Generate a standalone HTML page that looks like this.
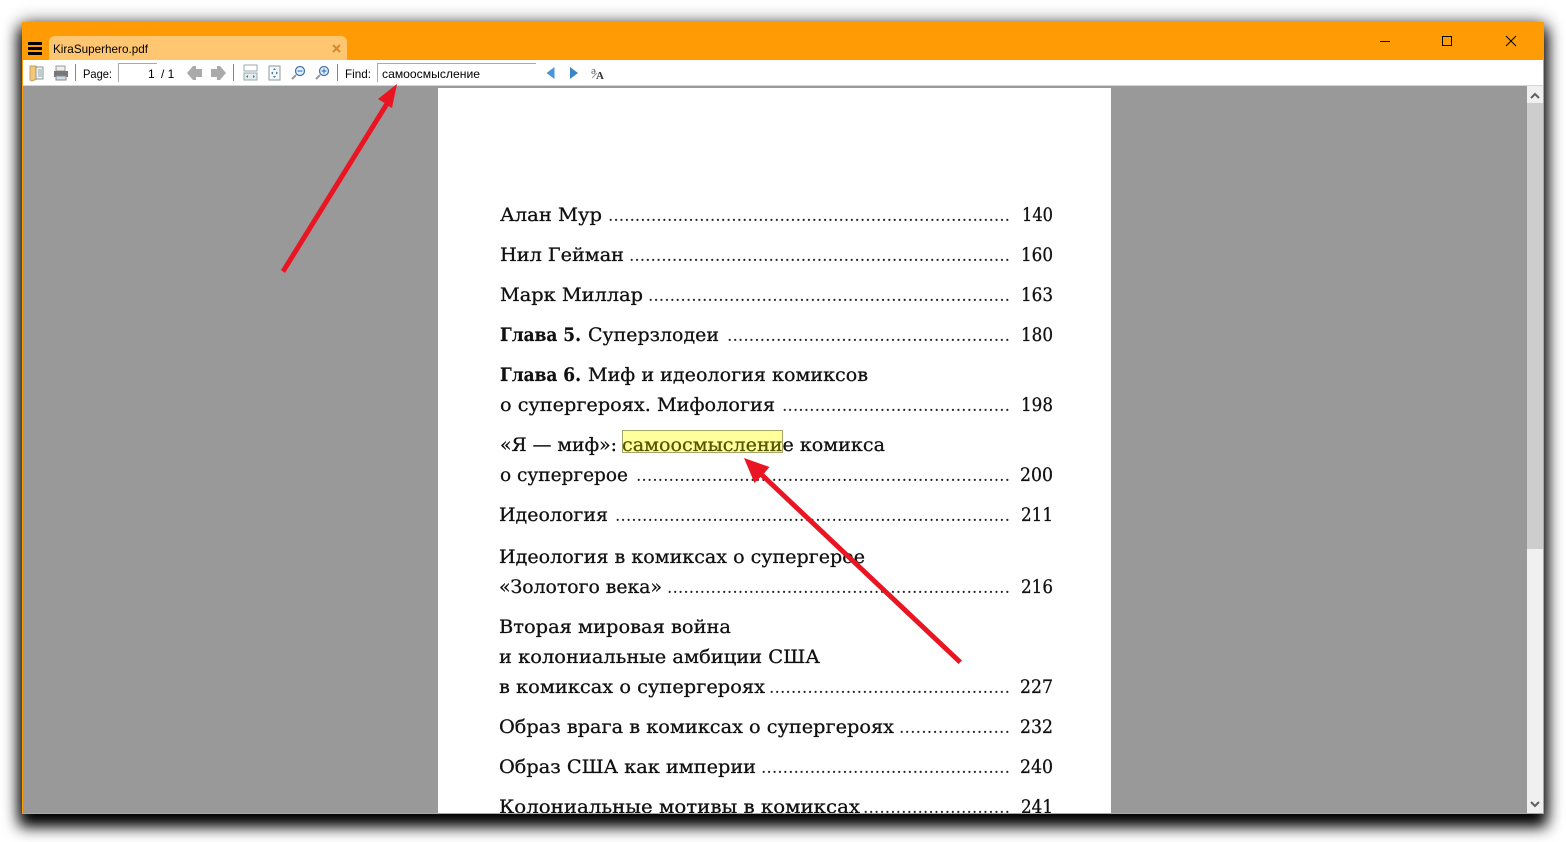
<!DOCTYPE html>
<html><head><meta charset="utf-8"><style>
html,body{margin:0;padding:0;background:#fff;width:1566px;height:842px;overflow:hidden}
#sh{position:absolute;left:22px;top:22px;width:1522px;height:792px;box-shadow:0 10px 14px 3px #000,0 0 16px 1px rgba(0,0,0,.45)}
svg{position:absolute;left:0;top:0}
.ui{font-family:"Liberation Sans",sans-serif;font-size:12px;fill:#000}
.b{font-family:"DejaVu Serif","Liberation Serif",serif;font-size:19px;fill:#111;stroke:#111;stroke-width:.3px;transform:translateY(-1px)}
.d{font-family:"DejaVu Serif","Liberation Serif",serif;font-size:17px;fill:#222;transform:translateY(-1px)}
.bb{font-family:"DejaVu Serif","Liberation Serif",serif;font-size:19px;font-weight:bold;fill:#111;stroke:#111;stroke-width:.2px;transform:translateY(-1px)}
</style></head><body>
<div id="sh"></div>
<svg width="1566" height="842" viewBox="0 0 1566 842">
<defs><clipPath id="c"><rect x="23" y="86" width="1504" height="727"/></clipPath></defs>
<rect x="22" y="22" width="1522" height="792" fill="#ff9c05"/>
<rect x="23" y="60" width="1520" height="25" fill="#fff"/>
<rect x="23" y="85" width="1520" height="1" fill="#d4d4d4"/>
<rect x="23" y="86" width="1504" height="727" fill="#999"/>
<rect x="1527" y="86" width="16" height="727" fill="#f0f0f0"/>
<rect x="1527" y="103" width="16" height="446" fill="#cdcdcd"/>
<path d="M1531 98l4-4 4 4" fill="none" stroke="#606060" stroke-width="2"/>
<path d="M1531 802l4 4 4-4" fill="none" stroke="#606060" stroke-width="2"/>
<rect x="28" y="42" width="14" height="3" fill="#000"/><rect x="28" y="47" width="14" height="3" fill="#000"/><rect x="28" y="52" width="14" height="3" fill="#000"/>
<path d="M49 60V42a6 6 0 0 1 6-6h286a6 6 0 0 1 6 6v18z" fill="#ffc671"/>
<text class="ui" x="53" y="53" textLength="95" lengthAdjust="spacingAndGlyphs" fill="#3a2000">KiraSuperhero.pdf</text>
<path d="M333 45l7 7m0-7l-7 7" stroke="#d68a2c" stroke-width="2"/>
<path d="M1380 41.500h10" stroke="#000"/>
<rect x="1442.500" y="36.500" width="9" height="9" fill="none" stroke="#000"/>
<path d="M1506 36l10 10m0-10l-10 10" stroke="#000"/>
<path d="M30 66h6l1 2v11l-5 2-2-1z" fill="#f2c878" stroke="#c8a058" stroke-width="1"/>
<rect x="36" y="67" width="7" height="12" fill="#eef2f0" stroke="#8a9a98"/>
<path d="M38 70h4M38 72h4M38 74h4M38 76h4" stroke="#9aa8a8"/>
<rect x="56" y="66" width="9" height="5" fill="#eee" stroke="#999"/>
<rect x="54" y="71" width="14" height="6" fill="#777"/>
<rect x="56" y="76" width="10" height="4" fill="#cde" stroke="#888"/>
<path d="M75.500 64v17M233.500 64v17M337.500 64v17" stroke="#888"/>
<text class="ui" x="83" y="78" textLength="29" lengthAdjust="spacingAndGlyphs">Page:</text>
<path d="M118.500 82V63.500H157" fill="none" stroke="#aaa"/>
<text class="ui" x="148" y="78" fill="#203">1</text>
<text class="ui" x="161" y="78">/ 1</text>
<path d="M187 73l6-7h3v3h6v8h-6v3h-3z" fill="#aaa"/>
<path d="M226 73l-6-7h-3v3h-6v8h6v3h3z" fill="#aaa"/>
<rect x="244" y="65" width="13" height="6" fill="#fff" stroke="#9aa8a8"/>
<rect x="244" y="73" width="13" height="7" fill="#e4ecec" stroke="#9aa8a8"/>
<path d="M246 76.500l2-1.500v3zM255 76.500l-2-1.500v3z" fill="#47a"/>
<rect x="269" y="66" width="11" height="14" fill="#f4f8f8" stroke="#8a9c9c"/>
<path d="M274.500 68l1.500 2h-3zM274.500 78l1.500-2h-3zM271 73l2-1.500v3zM278 73l-2-1.500v3z" fill="#47a"/>
<circle cx="300" cy="71" r="4.500" fill="#e4f0fa" stroke="#47a" stroke-width="1.300"/><path d="M297.500 71h5" stroke="#36a"/><path d="M296 75l-4 4" stroke="#999" stroke-width="2"/>
<circle cx="324" cy="71" r="4.500" fill="#e4f0fa" stroke="#47a" stroke-width="1.300"/><path d="M321.500 71h5M324 68.500v5" stroke="#36a"/><path d="M320 75l-4 4" stroke="#999" stroke-width="2"/>
<text class="ui" x="345" y="78" textLength="26" lengthAdjust="spacingAndGlyphs">Find:</text>
<path d="M377.500 82V63.500H536" fill="none" stroke="#aaa"/>
<text class="ui" x="382" y="78" textLength="98" lengthAdjust="spacingAndGlyphs" font-size="11">самоосмысление</text>
<path d="M546.500 73l8-6v12z" fill="#4a94d8"/>
<path d="M578 73l-8-6v12z" fill="#3a84c8"/>
<text x="591" y="74" font-family="Liberation Serif,serif" font-size="11" fill="#555">ə</text>
<text x="596" y="79" font-family="Liberation Serif,serif" font-size="11" font-weight="bold" fill="#333">A</text>
<path d="M592 78l5-5" stroke="#999"/>
<g clip-path="url(#c)">
<rect x="438" y="88" width="673" height="730" fill="#fff"/>
<text class="b" x="500" y="222" textLength="102" lengthAdjust="spacingAndGlyphs">Алан Мур</text>
<text class="d" x="608" y="222" textLength="402" lengthAdjust="spacing">...........................................................................</text>
<text class="b" x="1022" y="222" textLength="31" lengthAdjust="spacingAndGlyphs">140</text>
<text class="b" x="500" y="262" textLength="124" lengthAdjust="spacingAndGlyphs">Нил Гейман</text>
<text class="d" x="629" y="262" textLength="381" lengthAdjust="spacing">.......................................................................</text>
<text class="b" x="1021" y="262" textLength="32" lengthAdjust="spacingAndGlyphs">160</text>
<text class="b" x="500" y="302" textLength="143" lengthAdjust="spacingAndGlyphs">Марк Миллар</text>
<text class="d" x="648" y="302" textLength="362" lengthAdjust="spacing">...................................................................</text>
<text class="b" x="1021" y="302" textLength="32" lengthAdjust="spacingAndGlyphs">163</text>
<text class="bb" x="500" y="342" textLength="81" lengthAdjust="spacingAndGlyphs">Глава 5.</text>
<text class="b" x="588" y="342" textLength="131" lengthAdjust="spacingAndGlyphs">Суперзлодеи</text>
<text class="d" x="727" y="342" textLength="283" lengthAdjust="spacing">....................................................</text>
<text class="b" x="1021" y="342" textLength="32" lengthAdjust="spacingAndGlyphs">180</text>
<text class="bb" x="500" y="382" textLength="81" lengthAdjust="spacingAndGlyphs">Глава 6.</text>
<text class="b" x="588" y="382" textLength="280" lengthAdjust="spacingAndGlyphs">Миф и идеология комиксов</text>
<text class="b" x="500" y="412" textLength="275" lengthAdjust="spacingAndGlyphs">о супергероях. Мифология</text>
<text class="d" x="782" y="412" textLength="228" lengthAdjust="spacing">..........................................</text>
<text class="b" x="1021" y="412" textLength="32" lengthAdjust="spacingAndGlyphs">198</text>
<text class="b" x="500" y="452" textLength="117" lengthAdjust="spacingAndGlyphs">«Я — миф»:</text>
<rect x="622.500" y="430.500" width="160" height="22" fill="#ffff9c" stroke="#a6a66c"/>
<text class="b" x="622" y="452" textLength="263" lengthAdjust="spacingAndGlyphs"><tspan fill="#565600" stroke="#565600">самоосмыслени</tspan>е комикса</text>
<text class="b" x="500" y="482" textLength="128" lengthAdjust="spacingAndGlyphs">о супергерое</text>
<text class="d" x="636" y="482" textLength="374" lengthAdjust="spacing">.....................................................................</text>
<text class="b" x="1020" y="482" textLength="33" lengthAdjust="spacingAndGlyphs">200</text>
<text class="b" x="499" y="522" textLength="109" lengthAdjust="spacingAndGlyphs">Идеология</text>
<text class="d" x="615" y="522" textLength="395" lengthAdjust="spacing">.........................................................................</text>
<text class="b" x="1021" y="522" textLength="32" lengthAdjust="spacingAndGlyphs">211</text>
<text class="b" x="499" y="564" textLength="366" lengthAdjust="spacingAndGlyphs">Идеология в комиксах о супергерое</text>
<text class="b" x="499" y="594" textLength="163" lengthAdjust="spacingAndGlyphs">«Золотого века»</text>
<text class="d" x="667" y="594" textLength="343" lengthAdjust="spacing">...............................................................</text>
<text class="b" x="1021" y="594" textLength="32" lengthAdjust="spacingAndGlyphs">216</text>
<text class="b" x="499" y="634" textLength="232" lengthAdjust="spacingAndGlyphs">Вторая мировая война</text>
<text class="b" x="499" y="664" textLength="321" lengthAdjust="spacingAndGlyphs">и колониальные амбиции США</text>
<text class="b" x="499" y="694" textLength="266" lengthAdjust="spacingAndGlyphs">в комиксах о супергероях</text>
<text class="d" x="769" y="694" textLength="241" lengthAdjust="spacing">............................................</text>
<text class="b" x="1020" y="694" textLength="33" lengthAdjust="spacingAndGlyphs">227</text>
<text class="b" x="499" y="734" textLength="395" lengthAdjust="spacingAndGlyphs">Образ врага в комиксах о супергероях</text>
<text class="d" x="899" y="734" textLength="111" lengthAdjust="spacing">....................</text>
<text class="b" x="1020" y="734" textLength="33" lengthAdjust="spacingAndGlyphs">232</text>
<text class="b" x="499" y="774" textLength="257" lengthAdjust="spacingAndGlyphs">Образ США как империи</text>
<text class="d" x="761" y="774" textLength="249" lengthAdjust="spacing">..............................................</text>
<text class="b" x="1020" y="774" textLength="33" lengthAdjust="spacingAndGlyphs">240</text>
<text class="b" x="499" y="814" textLength="361" lengthAdjust="spacingAndGlyphs">Колониальные мотивы в комиксах</text>
<text class="d" x="863" y="814" textLength="147" lengthAdjust="spacing">...........................</text>
<text class="b" x="1021" y="814" textLength="32" lengthAdjust="spacingAndGlyphs">241</text>
</g>
<rect x="22" y="60" width="1" height="754" fill="#ff9c05"/>
<rect x="1543" y="60" width="1" height="754" fill="#ff9c05"/>
<rect x="22" y="813" width="1522" height="1" fill="#ff9c05"/>
<g fill="#ea1522">
<path d="M397 84L378 99L384.500 103L281 270L285 273L388.500 106L392 108Z"/>
<path d="M744 458L754.500 483L760.500 477L958.500 664L962 660.500L764 473.500L769.500 467Z"/>
</g>
</svg>
</body></html>
